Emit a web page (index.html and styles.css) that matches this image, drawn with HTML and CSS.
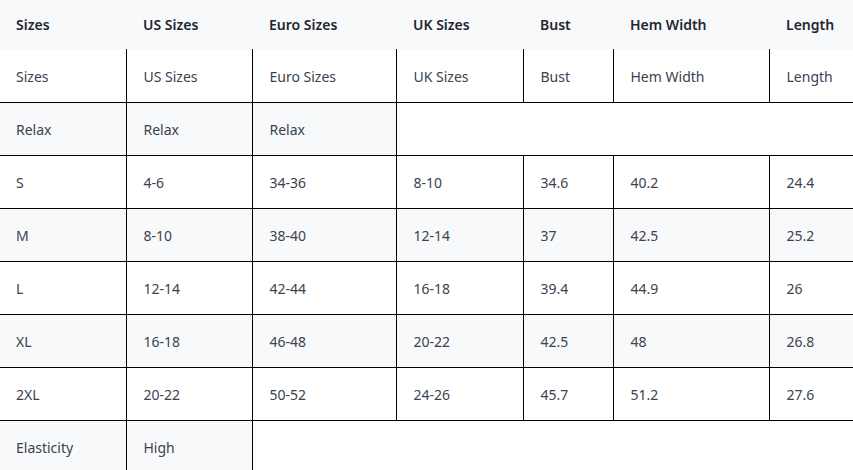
FILE: index.html
```html
<!DOCTYPE html>
<html>
<head>
<meta charset="utf-8">
<link rel="stylesheet" href="styles.css">
</head>
<body>
<table class="size-table">
  <colgroup>
    <col class="c1"><col class="c2"><col class="c3"><col class="c4"><col class="c5"><col class="c6"><col class="c7">
  </colgroup>
  <thead>
    <tr><th>Sizes</th><th>US Sizes</th><th>Euro Sizes</th><th>UK Sizes</th><th>Bust</th><th>Hem Width</th><th>Length</th></tr>
  </thead>
  <tbody>
    <tr><td>Sizes</td><td>US Sizes</td><td>Euro Sizes</td><td>UK Sizes</td><td>Bust</td><td>Hem Width</td><td>Length</td></tr>
    <tr class="partial"><td>Relax</td><td>Relax</td><td>Relax</td><td class="empty" colspan="4"></td></tr>
    <tr><td>S</td><td>4-6</td><td>34-36</td><td>8-10</td><td>34.6</td><td>40.2</td><td>24.4</td></tr>
    <tr><td>M</td><td>8-10</td><td>38-40</td><td>12-14</td><td>37</td><td>42.5</td><td>25.2</td></tr>
    <tr><td>L</td><td>12-14</td><td>42-44</td><td>16-18</td><td>39.4</td><td>44.9</td><td>26</td></tr>
    <tr><td>XL</td><td>16-18</td><td>46-48</td><td>20-22</td><td>42.5</td><td>48</td><td>26.8</td></tr>
    <tr><td>2XL</td><td>20-22</td><td>50-52</td><td>24-26</td><td>45.7</td><td>51.2</td><td>27.6</td></tr>
    <tr class="partial"><td>Elasticity</td><td>High</td><td class="empty" colspan="5"></td></tr>
  </tbody>
</table>
</body>
</html>
```
FILE: styles.css
```css
html, body {
  margin: 0;
  padding: 0;
  background: #ffffff;
}
body {
  font-family: "Noto Sans", "Open Sans", sans-serif;
  font-size: 14px;
  color: #3b4250;
}
.size-table {
  width: 853px;
  border-collapse: collapse;
  table-layout: fixed;
}
.c1 { width: 126px; }
.c2 { width: 126px; }
.c3 { width: 144px; }
.c4 { width: 127px; }
.c5 { width: 90px; }
.c6 { width: 156px; }
.c7 { width: 84px; }
.size-table th {
  background: #f8f9fb;
  color: #1f2632;
  font-weight: 600;
  text-align: left;
  height: 49px;
  padding: 0 16px 1px 17px;
  border: none;
  box-sizing: border-box;
}
.size-table td {
  height: 53px;
  padding: 2px 16px 0 17px;
  border: 1px solid #000;
  text-align: left;
  box-sizing: border-box;
}
.size-table th:first-child,
.size-table td:first-child {
  padding-left: 16px;
}
.size-table tbody tr:first-child td {
  border-top: none;
}
.size-table td:first-child {
  border-left: none;
}
.size-table td:last-child {
  border-right: none;
}
.size-table tbody tr:nth-child(even) td {
  background: #f8f9fb;
}
.size-table tbody tr:nth-child(even) td.empty {
  background: #ffffff;
}
```
